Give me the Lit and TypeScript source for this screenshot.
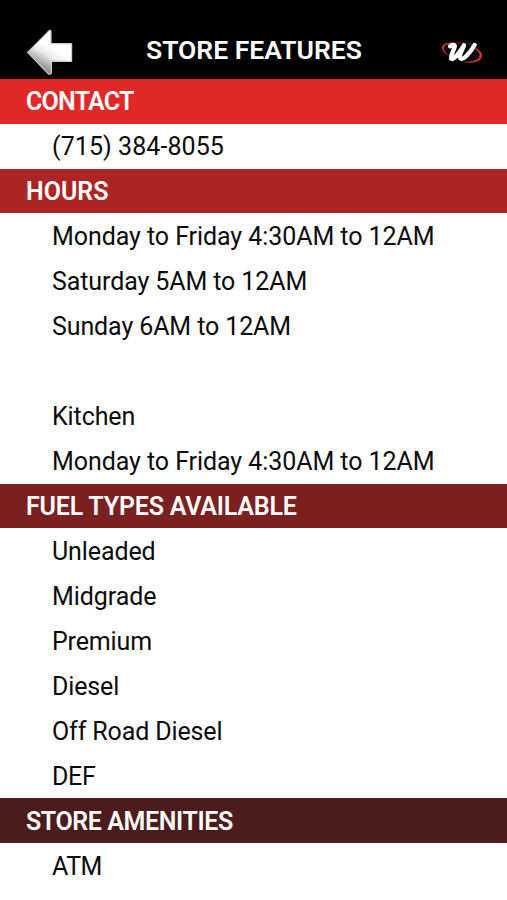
import { LitElement, html, css, svg } from "lit";
import { customElement } from "lit/decorators.js";

interface Item {
  text: string;
  spacing?: number;
}
interface Section {
  title: string;
  tone: string;
  spacing?: number;
  items: Item[];
}

const SECTIONS: Section[] = [
  { title: "CONTACT", tone: "#e12828", spacing: -0.75, items: [{ text: "(715) 384-8055", spacing: 0.08 }] },
  {
    title: "HOURS",
    tone: "#ad2424",
    items: [
      { text: "Monday to Friday 4:30AM to 12AM", spacing: -0.07 },
      { text: "Saturday 5AM to 12AM", spacing: -0.1 },
      { text: "Sunday 6AM to 12AM", spacing: -0.11 },
      { text: "" },
      { text: "Kitchen", spacing: -0.1 },
      { text: "Monday to Friday 4:30AM to 12AM", spacing: -0.07 },
    ],
  },
  {
    title: "FUEL TYPES AVAILABLE",
    tone: "#7b2021",
    spacing: -0.2,
    items: [
      { text: "Unleaded", spacing: -0.1 },
      { text: "Midgrade", spacing: -0.08 },
      { text: "Premium", spacing: -0.15 },
      { text: "Diesel", spacing: -0.15 },
      { text: "Off Road Diesel", spacing: -0.13 },
      { text: "DEF", spacing: -0.3 },
    ],
  },
  { title: "STORE AMENITIES", tone: "#4c1b1d", spacing: -0.4, items: [{ text: "ATM", spacing: -0.6 }] },
];

const backArrow = svg`
  <svg width="50" height="50" viewBox="0 0 50 50">
    <defs>
      <linearGradient id="metal" x1="0.55" y1="0.4" x2="0.3" y2="0.85">
        <stop offset="0" stop-color="#fff" />
        <stop offset="0.35" stop-color="#eee" />
        <stop offset="1" stop-color="#8c8c8c" />
      </linearGradient>
    </defs>
    <path d="M2.6 25.4 L24.4 3.4 Q26 2.8 26 4.8 V16.6 H46.6 V34.4 H26.4 V45.4 Q26 47.8 23.6 47 Z"
      fill="url(#metal)" stroke="#ccc" stroke-width="1.2" stroke-linejoin="round" />
  </svg>`;

const logo = svg`
  <svg width="46" height="26" viewBox="0 0 46 26">
    <path d="M20 3 C11 1.6 4.6 2.6 3.2 6.4 C2.2 10 5.4 13.6 11 16.2 C6.4 13 4.2 9.8 5.2 7 C6.4 4.2 11.4 3.2 20 3 Z" fill="#c8332b" />
    <path d="M37 8 C43 11.4 45 16 41.4 19.4 C37.6 22.8 29.6 23.4 23 21.8 C30 22 36 21.2 39 18.6 C42 15.8 40.4 12 36 9 Z" fill="#c8332b" />
    <path d="M18 3 C24 2.4 29 3 33 4.6" fill="none" stroke="#8e2a25" stroke-width="0.8" />
    <path d="M11 6.2 C12.6 5 16 4 15.8 6.2 C15.2 9.6 11.2 15.8 12.2 18.6 C14.2 20.8 21 12 25 5.4 C22.6 11 19.4 17.2 21.8 18.6 C25 20 32.4 11 35.6 5"
      fill="none" stroke="#fff" stroke-width="4.4" stroke-linecap="round" stroke-linejoin="round" />
  </svg>`;

@customElement("app-root")
export class AppRoot extends LitElement {
  static styles = css`
    :host {
      display: block;
      height: 900px;
      overflow: hidden;
      background: #fff;
      color: #0c0c0c;
      font: 400 25px/44px Roboto, sans-serif;
      white-space: nowrap;
    }
    .bar {
      display: grid;
      grid-template-columns: 146px 1fr 68px;
      height: 79px;
      box-sizing: border-box;
      padding-top: 27px;
      background: #000;
      color: #fff;
    }
    .back {
      padding-left: 25px;
      line-height: 0;
    }
    .title {
      margin: 0;
      font-size: 26.5px;
      font-weight: 600;
      line-height: 45px;
    }
    .logo {
      padding-top: 12.5px;
      line-height: 0;
    }
    .heading,
    .row {
      box-sizing: border-box;
      padding-top: 0.3px;
      line-height: 46px;
    }
    .heading {
      height: 44.5px;
      margin: 0 0 0.46px;
      padding-left: 26px;
      color: #fff;
      font-size: 25px;
      font-weight: 600;
    }
    .rows {
      margin: 0;
      padding: 0 0 0 52px;
      list-style: none;
    }
    .row {
      height: 44.96px;
    }
  `;

  render() {
    return html`
      <header class="bar">
        <div class="back">${backArrow}</div>
        <h1 class="title"><span>STORE FEATURES</span></h1>
        <div class="logo">${logo}</div>
      </header>
      ${SECTIONS.map(
        (s) => html`<section>
          <h2 class="heading" style="background:${s.tone};letter-spacing:${s.spacing ?? 0}px">${s.title}</h2>
          <ul class="rows">
            ${s.items.map((i) => html`<li class="row" style="letter-spacing:${i.spacing ?? 0}px">${i.text}</li>`)}
          </ul>
        </section>`
      )}
    `;
  }
}
